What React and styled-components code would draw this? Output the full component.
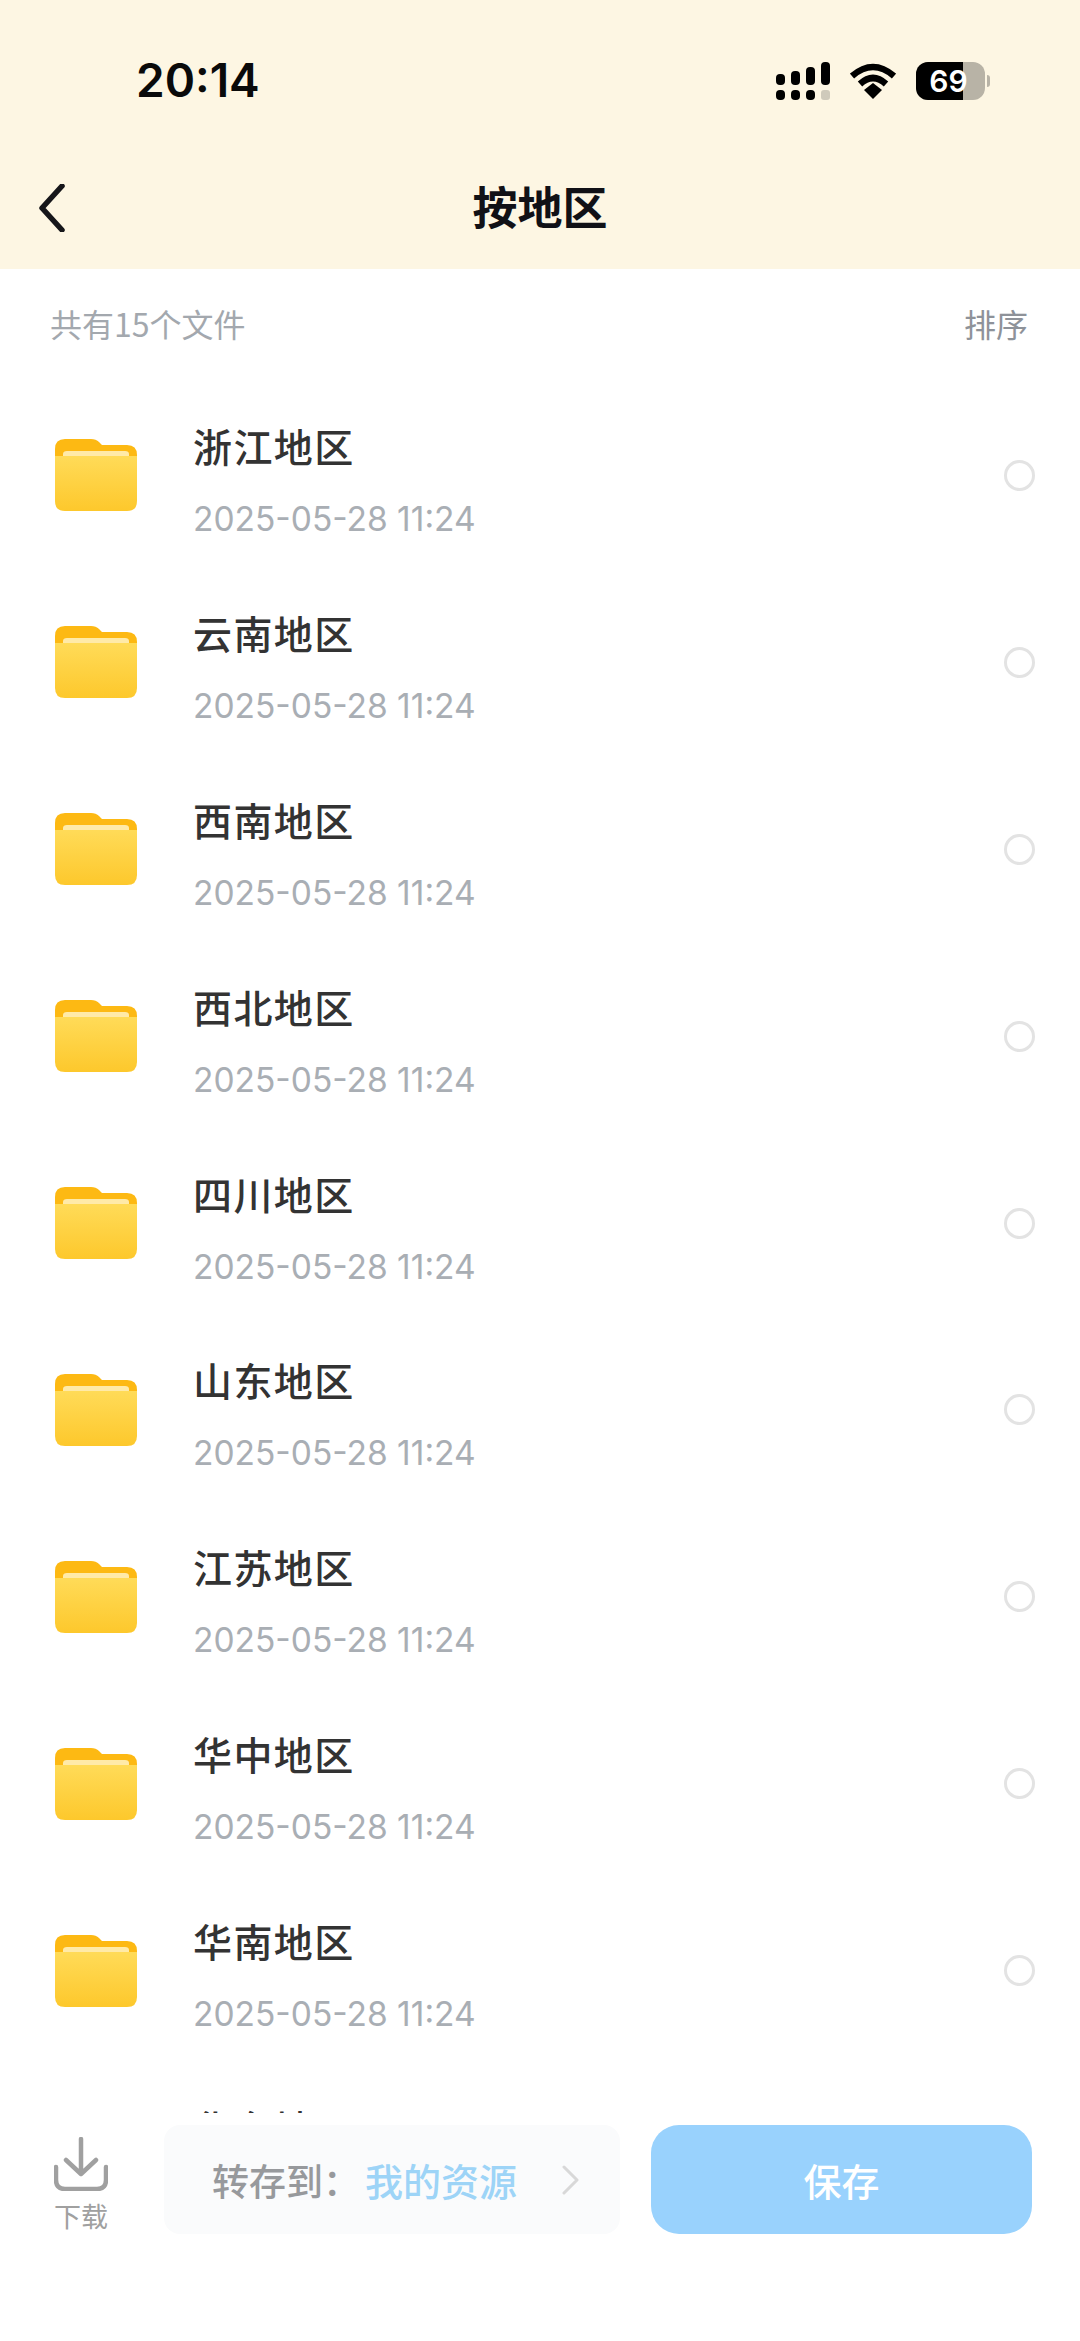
import styled, { createGlobalStyle } from "styled-components";

const regions = [
  "浙江地区",
  "云南地区",
  "西南地区",
  "西北地区",
  "四川地区",
  "山东地区",
  "江苏地区",
  "华中地区",
  "华南地区",
  "华东地区",
];

function FolderIcon() {
  return (
    <FolderSvg viewBox="0 0 82 72">
      <defs>
        <linearGradient id="folderFront" x1="0" y1="0" x2="0" y2="1">
          <stop offset="0" stopColor="#ffdb58" />
          <stop offset="1" stopColor="#fdc82c" />
        </linearGradient>
      </defs>
      <path
        d="M0 10 Q0 0 10 0 H36 Q41 0 44 3 L47 6 H72 Q82 6 82 16 V30 H0 Z"
        fill="#fdb913"
      />
      <path d="M8 15 Q8 12 12 12 H70 Q74 12 74 15 V20 H8 Z" fill="#ffeaa8" />
      <path
        d="M0 17 H82 V62 Q82 72 72 72 H10 Q0 72 0 62 Z"
        fill="url(#folderFront)"
      />
    </FolderSvg>
  );
}

function SignalIcon() {
  return (
    <svg width="54" height="38" viewBox="0 0 54 38">
      <rect x="0" y="12" width="9" height="11" rx="4" fill="#000" />
      <rect x="15" y="9" width="9" height="14" rx="4" fill="#000" />
      <rect x="30" y="5" width="9" height="18" rx="4" fill="#000" />
      <rect x="45" y="0" width="9" height="23" rx="4" fill="#000" />
      <rect x="0" y="28" width="9" height="10" rx="4" fill="#000" />
      <rect x="15" y="28" width="9" height="10" rx="4" fill="#000" />
      <rect x="30" y="28" width="9" height="10" rx="4" fill="#000" />
      <rect x="45" y="28" width="9" height="10" rx="3" fill="#cfcabb" />
    </svg>
  );
}

function WifiIcon() {
  return (
    <svg width="46" height="36" viewBox="0 0 46 36" fill="none">
      <path d="M2 13 Q23 -5 44 13" stroke="#000" strokeWidth="6.5" />
      <path d="M10 21 Q23 9 36 21" stroke="#000" strokeWidth="6.5" />
      <path d="M14 27 L23 20 L32 27 L23 36 Z" fill="#000" />
    </svg>
  );
}

function BackIcon() {
  return (
    <svg width="26" height="48" viewBox="0 0 26 48" fill="none">
      <path
        d="M23 2 L3 24 L23 46"
        stroke="#16161a"
        strokeWidth="5.5"
        strokeLinecap="round"
        strokeLinejoin="round"
      />
    </svg>
  );
}

function DownloadIcon() {
  return (
    <svg width="54" height="54" viewBox="0 0 54 54" fill="none">
      <path
        d="M27 2 V36 M12 23 L27 37 L42 23"
        stroke="#a0a0a0"
        strokeWidth="4.5"
        strokeLinecap="round"
        strokeLinejoin="round"
      />
      <path
        d="M2 30 V43 Q2 52 11 52 H43 Q52 52 52 43 V30"
        stroke="#a0a0a0"
        strokeWidth="4.5"
        strokeLinecap="round"
      />
    </svg>
  );
}

function ForwardIcon() {
  return (
    <svg width="17" height="30" viewBox="0 0 17 30" fill="none">
      <path
        d="M2 2 L15 15 L2 28"
        stroke="#d8d8d8"
        strokeWidth="3"
        strokeLinecap="round"
        strokeLinejoin="round"
      />
    </svg>
  );
}

export default function App() {
  return (
    <>
      <GlobalStyle />
      <Page>
        <Header>
          <StatusBar>
            <Clock>20:14</Clock>
            <StatusIcons>
              <SignalIcon />
              <WifiIcon />
              <Battery>
                <BatteryLevel />
                <BatteryText>69</BatteryText>
              </Battery>
              <BatteryTip />
            </StatusIcons>
          </StatusBar>
          <NavBar>
            <BackButton>
              <BackIcon />
            </BackButton>
            <NavTitle>按地区</NavTitle>
          </NavBar>
        </Header>

        <SummaryRow>
          <SummaryText>共有15个文件</SummaryText>
          <SortText>排序</SortText>
        </SummaryRow>

        <FileList>
          {regions.map((name) => (
            <FileRow key={name}>
              <FolderIcon />
              <FileInfo>
                <FileName>{name}</FileName>
                <FileDate>2025-05-28 11:24</FileDate>
              </FileInfo>
              <Radio />
            </FileRow>
          ))}
        </FileList>

        <BottomBar>
          <DownloadButton>
            <DownloadIcon />
            <DownloadLabel>下载</DownloadLabel>
          </DownloadButton>
          <SaveTarget>
            <TargetLabel>转存到：</TargetLabel>
            <TargetValue>我的资源</TargetValue>
            <ForwardIcon />
          </SaveTarget>
          <SaveButton>保存</SaveButton>
        </BottomBar>
      </Page>
    </>
  );
}

const GlobalStyle = createGlobalStyle`
  html, body {
    margin: 0;
    padding: 0;
    background: #ffffff;
  }
  * {
    box-sizing: border-box;
  }
`;

const Page = styled.div`
  width: 1080px;
  height: 2341px;
  display: flex;
  flex-direction: column;
  overflow: hidden;
  background: #ffffff;
  font-family: "Noto Sans CJK SC", "Inter", sans-serif;
`;

const Header = styled.header`
  height: 269px;
  flex-shrink: 0;
  background: #fdf6e3;
`;

const StatusBar = styled.div`
  height: 160px;
  padding: 56px 90px 0 136px;
  display: flex;
  justify-content: space-between;
  align-items: flex-start;
`;

const Clock = styled.span`
  font-family: "Inter", sans-serif;
  font-size: 46px;
  line-height: 48px;
  font-weight: 600;
  color: #0a0a0a;
`;

const StatusIcons = styled.div`
  height: 40px;
  margin-top: 5px;
  display: flex;
  align-items: center;
  gap: 20px;
`;

const Battery = styled.div`
  width: 69px;
  height: 38px;
  padding-right: 4px;
  position: relative;
  border-radius: 12px;
  background: #b8b3a6;
  overflow: hidden;
  display: flex;
  align-items: center;
  justify-content: center;
`;

const BatteryLevel = styled.div`
  position: absolute;
  left: 0;
  top: 0;
  bottom: 0;
  width: 47px;
  background: #000000;
`;

const BatteryText = styled.span`
  position: relative;
  font-family: "Inter", sans-serif;
  font-size: 30px;
  font-weight: 600;
  color: #ffffff;
`;

const BatteryTip = styled.div`
  width: 3px;
  height: 12px;
  margin-left: -18px;
  border-radius: 0 3px 3px 0;
  background: #b8b3a6;
`;

const NavBar = styled.nav`
  height: 98px;
  position: relative;
  display: flex;
  align-items: center;
  justify-content: center;
`;

const BackButton = styled.div`
  position: absolute;
  left: 39px;
  top: 24px;
  line-height: 0;
`;

const NavTitle = styled.h1`
  margin: 0 0 7px;
  font-size: 45px;
  line-height: 60px;
  font-weight: 700;
  color: #111116;
`;

const SummaryRow = styled.div`
  height: 80px;
  flex-shrink: 0;
  padding: 28px 52px 0 50px;
  display: flex;
  justify-content: space-between;
  align-items: center;
`;

const SummaryText = styled.span`
  font-size: 32px;
  line-height: 44px;
  color: #a3a8ae;
`;

const SortText = styled.span`
  font-size: 32px;
  line-height: 44px;
  color: #8e9299;
`;

const FileList = styled.ul`
  flex: 1;
  min-height: 0;
  margin: 0;
  padding: 33px 0 0;
  list-style: none;
  overflow: hidden;
`;

const FileRow = styled.li`
  height: 186.9px;
  padding: 0 45px 0 55px;
  display: flex;
  align-items: center;
`;

const FolderSvg = styled.svg`
  width: 82px;
  height: 72px;
  flex-shrink: 0;
`;

const FileInfo = styled.div`
  flex: 1;
  margin-left: 56px;
  padding-top: 6px;
  display: flex;
  flex-direction: column;
`;

const FileName = styled.div`
  font-size: 39px;
  line-height: 52px;
  letter-spacing: 1.4px;
  font-weight: 500;
  color: #333333;
`;

const FileDate = styled.div`
  margin-top: 29px;
  font-family: "Inter", sans-serif;
  font-size: 33.5px;
  line-height: 38px;
  color: #a9aeb4;
`;

const Radio = styled.span`
  width: 31px;
  height: 31px;
  border: 3px solid #e3e3e3;
  border-radius: 50%;
`;

const BottomBar = styled.div`
  height: 228px;
  flex-shrink: 0;
  padding: 12px 48px 0 54px;
  display: flex;
  align-items: flex-start;
  background: #ffffff;
`;

const DownloadButton = styled.div`
  width: 54px;
  padding-top: 12px;
  display: flex;
  flex-direction: column;
  align-items: center;
`;

const DownloadLabel = styled.span`
  margin-top: 7px;
  font-size: 27px;
  line-height: 36px;
  white-space: nowrap;
  color: #a0a0a0;
`;

const SaveTarget = styled.div`
  width: 456px;
  height: 109px;
  margin-left: 56px;
  padding-left: 48px;
  border-radius: 16px;
  background: #fafbfc;
  display: flex;
  align-items: center;
`;

const TargetLabel = styled.span`
  width: 153px;
  font-size: 37px;
  line-height: 50px;
  font-weight: 500;
  color: #97999c;
`;

const TargetValue = styled.span`
  width: 197px;
  font-size: 38px;
  line-height: 50px;
  font-weight: 500;
  color: #9dd4f7;
`;

const SaveButton = styled.div`
  width: 381px;
  height: 109px;
  margin-left: 31px;
  border-radius: 28px;
  background: #99d2fd;
  display: flex;
  align-items: center;
  justify-content: center;
  font-size: 38px;
  font-weight: 500;
  color: #ffffff;
`;
